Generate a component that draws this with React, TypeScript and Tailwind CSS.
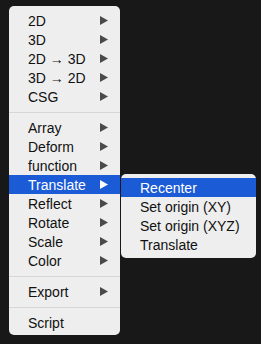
import React from "react";

type Item = { label: string; sub?: boolean; active?: boolean } | "sep";

const mainItems: Item[] = [
  { label: "2D", sub: true },
  { label: "3D", sub: true },
  { label: "2D → 3D", sub: true },
  { label: "3D → 2D", sub: true },
  { label: "CSG", sub: true },
  "sep",
  { label: "Array", sub: true },
  { label: "Deform", sub: true },
  { label: "function", sub: true },
  { label: "Translate", sub: true, active: true },
  { label: "Reflect", sub: true },
  { label: "Rotate", sub: true },
  { label: "Scale", sub: true },
  { label: "Color", sub: true },
  "sep",
  { label: "Export", sub: true },
  "sep",
  { label: "Script" },
];

const subItems = [
  { label: "Recenter", active: true },
  { label: "Set origin (XY)" },
  { label: "Set origin (XYZ)" },
  { label: "Translate" },
];

function Arrow({ active }: { active?: boolean }) {
  return (
    <svg width="8" height="9" viewBox="0 0 8 9" className="shrink-0">
      <polygon points="0,0 8,4.5 0,9" fill={active ? "#ffffff" : "#4a4a4a"} />
    </svg>
  );
}

function MenuRow({ label, sub, active }: { label: string; sub?: boolean; active?: boolean }) {
  return (
    <div
      className={`flex h-[19px] items-center justify-between pl-[19px] pr-[12px] ${
        active ? "bg-[#1b5bd6] text-white" : "text-[#111]"
      }`}
    >
      <span className="leading-none">{label}</span>
      {sub && <Arrow active={active} />}
    </div>
  );
}

export default function App() {
  return (
    <div
      className="relative h-[344px] w-[261px] overflow-hidden bg-[#181818] text-[14px]"
      style={{ fontFamily: '"Liberation Sans", Arial, sans-serif' }}
    >
      {/* Main context menu */}
      <div className="ml-[9px] mt-[6px] w-[111px] rounded-[5px] bg-[#eeeeee] pt-[5px] pb-[3px]">
        {mainItems.map((item, i) =>
          item === "sep" ? (
            <div key={i} className="flex h-[12px] items-center">
              <div className="h-px w-full bg-[#d6d6d6]" />
            </div>
          ) : (
            <MenuRow key={i} {...item} />
          )
        )}
      </div>

      {/* Translate submenu */}
      <div className="absolute left-[121px] top-[174px] w-[135px] rounded-[5px] bg-[#eeeeee] py-[4px]">
        {subItems.map((item) => (
          <MenuRow key={item.label} {...item} />
        ))}
      </div>
    </div>
  );
}
